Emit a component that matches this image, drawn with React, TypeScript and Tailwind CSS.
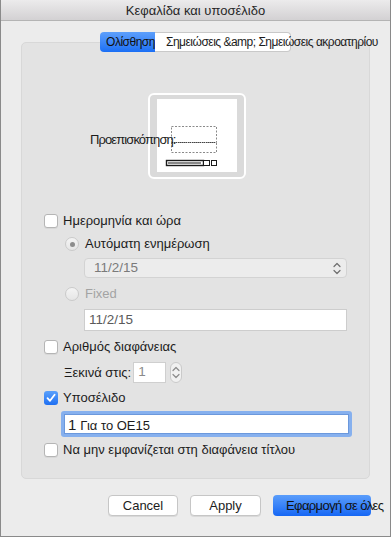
import React from "react";

function CheckBox({ checked = false }: { checked?: boolean }) {
  if (checked) {
    return (
      <div className="flex h-[14px] w-[14px] shrink-0 items-center justify-center rounded-[3px] bg-gradient-to-b from-[#5aa0fb] to-[#1e6ff2]">
        <svg width="10" height="10" viewBox="0 0 10 10">
          <path d="M1.5 5.2 L4 7.8 L8.6 1.8" fill="none" stroke="white" strokeWidth="1.8" strokeLinecap="round" strokeLinejoin="round" />
        </svg>
      </div>
    );
  }
  return (
    <div className="h-[14px] w-[14px] shrink-0 rounded-[3px] border border-[#b5b5b5] bg-white shadow-[0_1px_0_rgba(0,0,0,0.05)]" />
  );
}

function Radio({ selected = false }: { selected?: boolean }) {
  return (
    <div className="flex h-[14px] w-[14px] shrink-0 items-center justify-center rounded-full border border-[#cacaca] bg-gradient-to-b from-[#f4f4f4] to-[#e6e6e6]">
      {selected ? <div className="h-[5px] w-[5px] rounded-full bg-[#8d8d8d]" /> : null}
    </div>
  );
}

function UpDown({ className }: { className?: string }) {
  return (
    <svg width="8" height="13" viewBox="0 0 8 13" className={className}>
      <path d="M1 4.5 L4 1.5 L7 4.5 M1 8.5 L4 11.5 L7 8.5" fill="none" stroke="currentColor" strokeWidth="1.2" strokeLinecap="round" strokeLinejoin="round" />
    </svg>
  );
}

function PreviewDrawing() {
  return (
    <svg width="80" height="73" viewBox="0 0 80 73">
      <rect x="14.5" y="27.5" width="45" height="16" fill="none" stroke="#8a8a8a" strokeDasharray="2 1.5" />
      <rect x="14.5" y="43.5" width="45" height="10" fill="none" stroke="#8a8a8a" strokeDasharray="2 1.5" />
      <line x1="15" y1="43.5" x2="59" y2="43.5" stroke="#444" strokeDasharray="1 1" />
      <rect x="9.5" y="61.5" width="37" height="5" fill="white" stroke="#1a1a1a" strokeWidth="1.4" />
      <rect x="11" y="63" width="33" height="2" fill="#888" />
      <rect x="46.5" y="61.5" width="6" height="5" fill="white" stroke="#1a1a1a" />
      <rect x="54.5" y="61.5" width="5" height="5" fill="white" stroke="#1a1a1a" />
    </svg>
  );
}

export default function App() {
  return (
    <div className="flex h-[537px] w-[391px] flex-col border-x border-b border-[#8a8a8a] bg-[#ececec] font-['Liberation_Sans','DejaVu_Sans',sans-serif] text-[13px] text-[#1c1c1c]">
      <div className="flex h-[21px] shrink-0 items-center justify-center border-b border-[#b4b4b4] bg-gradient-to-b from-[#ecebec] to-[#d3d1d3] pt-[1px] text-[13px] text-[#262626]">
        Κεφαλίδα και υποσέλιδο
      </div>

      <div className="px-[20px] pt-[11px]">
        <div className="relative z-10 ml-[79px] flex h-[20px] text-[12px] tracking-[-0.5px]">
          <div className="flex w-[55px] items-center justify-center whitespace-nowrap rounded-l-[4px] bg-gradient-to-b from-[#5d9ffb] to-[#1a6ff5] pl-[6px] text-[#111]">
            Ολίσθηση
          </div>
          <div className="flex w-[136px] items-center whitespace-nowrap rounded-r-[4px] border border-l-0 border-[#c9c9c9] bg-white pl-[11px]">
            Σημειώσεις &amp;amp; Σημειώσεις ακροατηρίου
          </div>
        </div>

        <div className="-mt-[10px] flex h-[437px] flex-col rounded-[5px] border border-[#d8d8d8] bg-[#e3e3e3] pt-[50px]">
          <div className="flex items-center pl-[68px]">
            <div className="relative z-10 mt-[8px] w-[58px] whitespace-nowrap tracking-[-0.9px]">Προεπισκόπηση:</div>
            <div className="h-[86px] w-[98px] rounded-[6px] border-2 border-white bg-[#dadada] pb-[5px] pl-[7px] pr-[7px] pt-[4px]">
              <div className="h-[73px] w-[80px] bg-white">
                <PreviewDrawing />
              </div>
            </div>
          </div>

          <div className="flex flex-col pl-[22px]">
            <div className="mt-[35px] flex h-[14px] items-center gap-[5px]">
              <CheckBox />
              <span>Ημερομηνία και ώρα</span>
            </div>

            <div className="ml-[21px] mt-[9px] flex h-[14px] items-center gap-[6px]">
              <Radio selected />
              <span>Αυτόματη ενημέρωση</span>
            </div>

            <div className="ml-[40px] mt-[7px] flex h-[20px] w-[263px] items-center justify-between rounded-[4px] border border-[#d3d3d3] bg-[#ececec] pl-[9px] pr-[5px] text-[13.5px] text-[#7a7a7a]">
              <span>11/2/15</span>
              <UpDown className="text-[#6f6f6f]" />
            </div>

            <div className="ml-[21px] mt-[9px] flex h-[14px] items-center gap-[6px] text-[#a3a3a3]">
              <Radio />
              <span>Fixed</span>
            </div>

            <div className="ml-[40px] mt-[8px] flex h-[22px] w-[263px] items-center border border-[#cdcdcd] bg-white pl-[4px] text-[13.5px] text-[#5a5a5a]">
              11/2/15
            </div>

            <div className="mt-[9px] flex h-[14px] items-center gap-[5px]">
              <CheckBox />
              <span>Αριθμός διαφάνειας</span>
            </div>

            <div className="ml-[20px] mt-[8px] flex h-[21px] items-center">
              <span className="mr-[2px]">Ξεκινά στις:</span>
              <div className="flex h-[21px] w-[33px] items-center border border-[#cfcfcf] bg-white pl-[4px] text-[13.5px] text-[#8a8a8a]">
                1
              </div>
              <div className="ml-[4px] flex h-[21px] w-[12px] items-center justify-center rounded-full border border-[#cacaca] bg-[#f1f1f1]">
                <UpDown className="text-[#8c8c8c]" />
              </div>
            </div>

            <div className="mt-[8px] flex h-[14px] items-center gap-[5px]">
              <CheckBox checked />
              <span>Υποσέλιδο</span>
            </div>

            <div className="ml-[17px] mt-[6px] flex h-[26px] w-[291px] rounded-[3px] bg-[#86b0ee] p-[3px]">
              <div className="flex h-full w-full items-center border border-[#6b98dc] bg-white pl-[3px]">
                <span className="text-[15px] leading-none">1</span>
                <span className="ml-[4px] mt-[3px] text-[13px] leading-none">Για το ΟΕ15</span>
              </div>
            </div>

            <div className="mt-[6px] flex h-[14px] items-center gap-[5px]">
              <CheckBox />
              <span>Να μην εμφανίζεται στη διαφάνεια τίτλου</span>
            </div>
          </div>
        </div>
      </div>

      <div className="mt-[16px] flex justify-end gap-[12px] pr-[19px] text-[13px]">
        <button type="button" className="flex h-[21px] w-[70px] items-center justify-center rounded-[4px] border border-[#c6c6c6] bg-white shadow-[0_1px_0_rgba(0,0,0,0.08)]">
          Cancel
        </button>
        <button type="button" className="flex h-[21px] w-[71px] items-center justify-center rounded-[4px] border border-[#c6c6c6] bg-white shadow-[0_1px_0_rgba(0,0,0,0.08)]">
          Apply
        </button>
        <button type="button" className="flex h-[21px] w-[98px] items-center whitespace-nowrap rounded-[4px] bg-gradient-to-b from-[#5a9dfb] to-[#1466f4] pl-[13px] tracking-[-0.6px] text-[#111]">
          Εφαρμογή σε όλες
        </button>
      </div>
    </div>
  );
}
